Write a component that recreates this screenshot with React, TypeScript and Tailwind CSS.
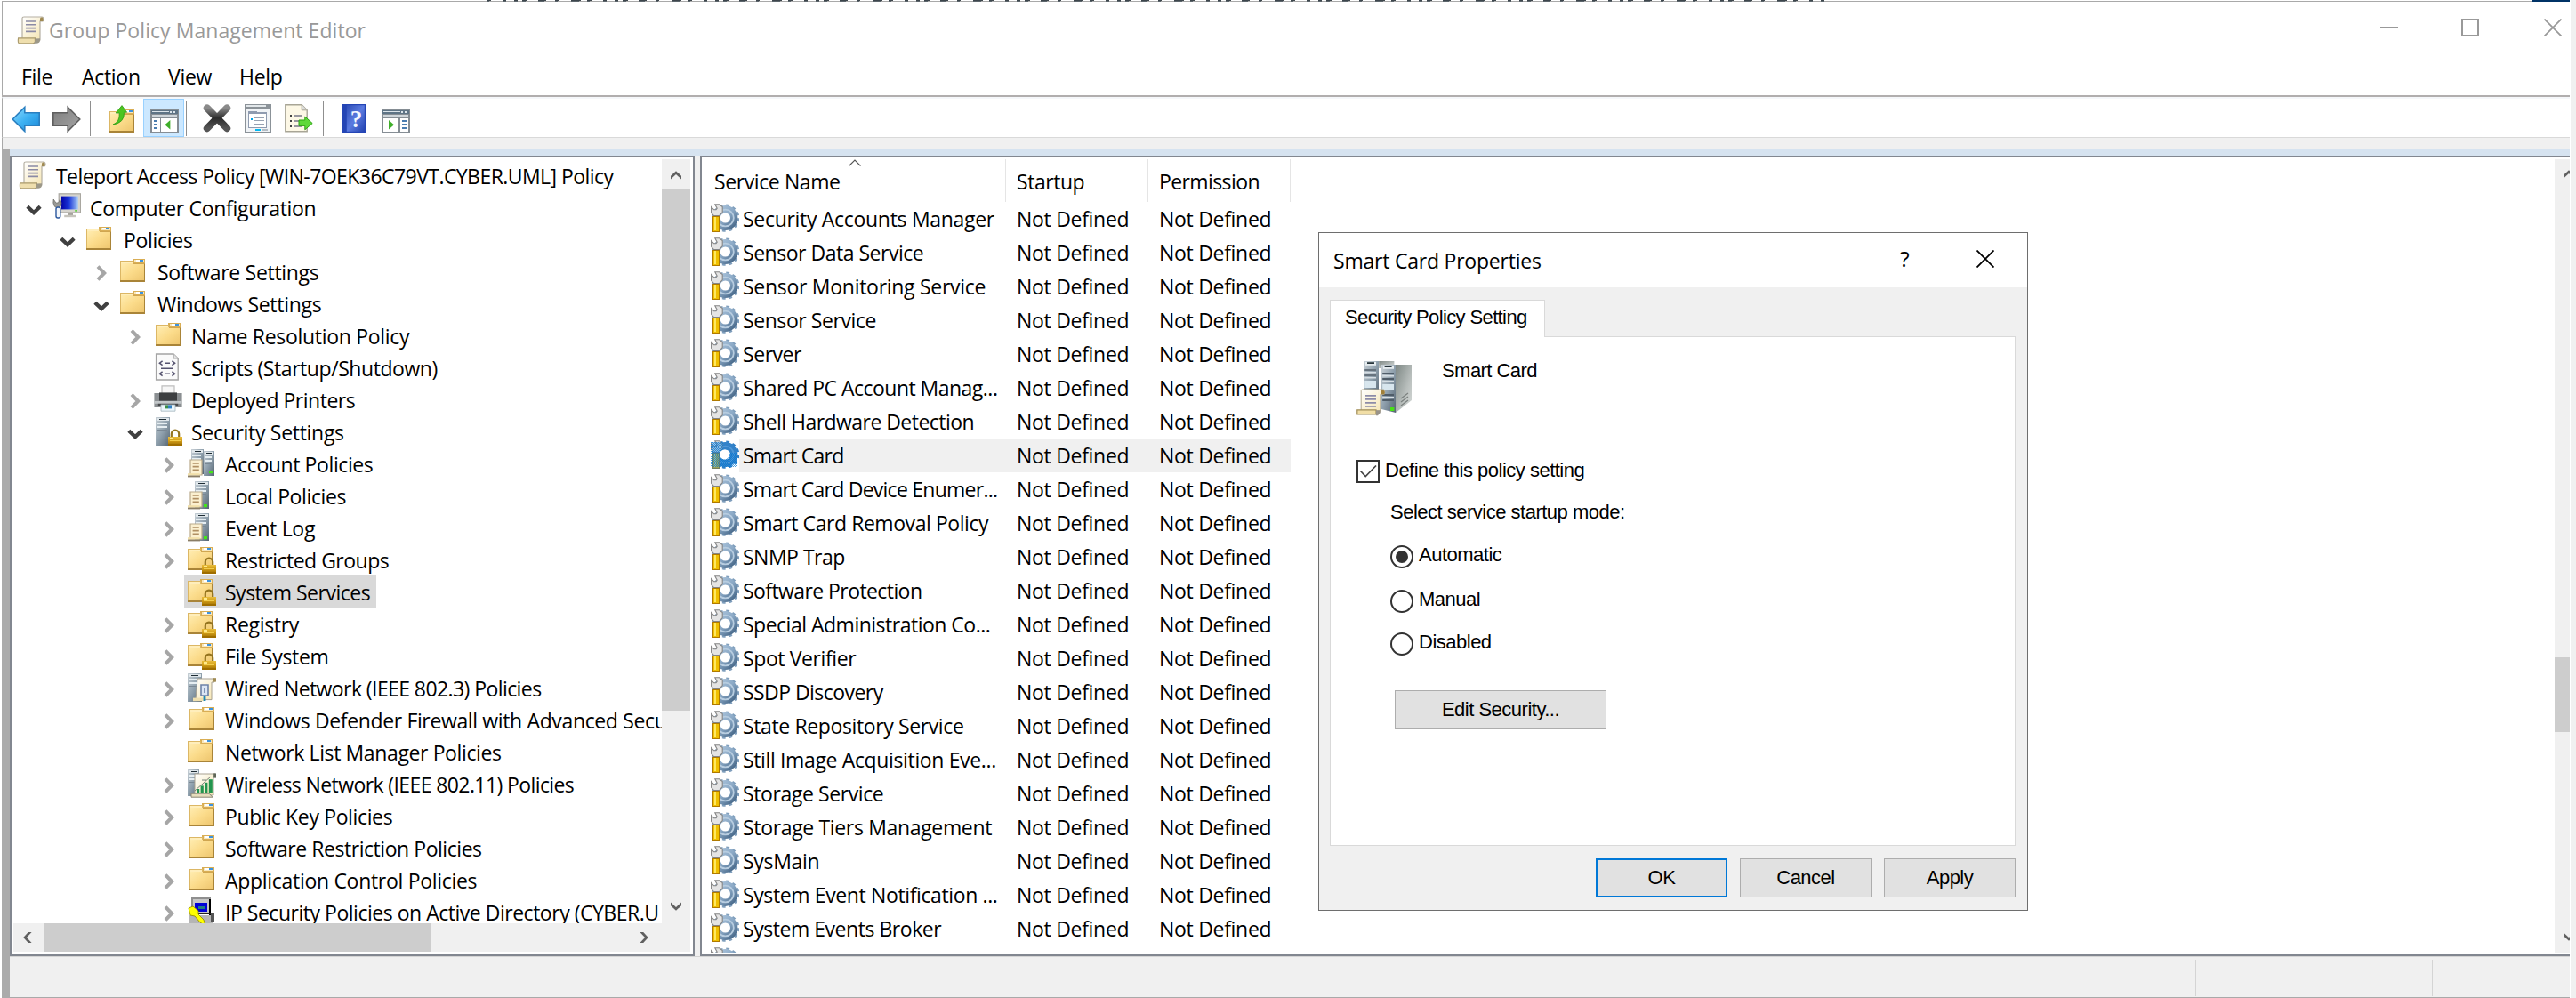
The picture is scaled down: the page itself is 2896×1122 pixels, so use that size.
import React from "react";

/* ---------- icons (drawn on a 16 unit grid, shown at 32px) ---------- */

const Svg = ({ children, className = "size-8" }: { children: React.ReactNode; className?: string }) => (
  <svg viewBox="0 0 16 16" className={`block shrink-0 ${className}`}>
    {children}
  </svg>
);

const Defs = () => (
  <svg className="absolute size-0">
    <defs>
      <linearGradient id="folder" x1="0" y1="0" x2="1" y2="1">
        <stop offset="0" stopColor="#ffecb0" />
        <stop offset="0.5" stopColor="#fbdb8a" />
        <stop offset="1" stopColor="#eec66f" />
      </linearGradient>
      <linearGradient id="steel" x1="0" y1="0" x2="1" y2="1">
        <stop offset="0" stopColor="#c8d0d6" />
        <stop offset="0.5" stopColor="#8fa0ad" />
        <stop offset="1" stopColor="#566572" />
      </linearGradient>
      <linearGradient id="side" x1="0" y1="0" x2="1" y2="1">
        <stop offset="0" stopColor="#7d8784" />
        <stop offset="0.6" stopColor="#b9bfbd" />
        <stop offset="1" stopColor="#d8dcda" />
      </linearGradient>
      <linearGradient id="paper" x1="0" y1="0" x2="1" y2="1">
        <stop offset="0" stopColor="#ffffff" />
        <stop offset="1" stopColor="#f5e4ae" />
      </linearGradient>
      <linearGradient id="gear" x1="0" y1="0" x2="1" y2="1">
        <stop offset="0" stopColor="#a9c2da" />
        <stop offset="0.5" stopColor="#8ba9c6" />
        <stop offset="1" stopColor="#4a6b8c" />
      </linearGradient>
      <linearGradient id="gold" x1="0" y1="0" x2="0" y2="1">
        <stop offset="0" stopColor="#e8bc3a" />
        <stop offset="0.5" stopColor="#cf9a16" />
        <stop offset="1" stopColor="#9a6c00" />
      </linearGradient>
      <linearGradient id="screen" x1="0" y1="0" x2="1" y2="0">
        <stop offset="0" stopColor="#0404a8" />
        <stop offset="0.45" stopColor="#1a35d8" />
        <stop offset="1" stopColor="#a9ccf7" />
      </linearGradient>
      <linearGradient id="back" x1="0" y1="0" x2="1" y2="1">
        <stop offset="0" stopColor="#8fdcff" />
        <stop offset="0.5" stopColor="#3db1f2" />
        <stop offset="1" stopColor="#1a86d6" />
      </linearGradient>
      <linearGradient id="fwd" x1="0" y1="0" x2="1" y2="1">
        <stop offset="0" stopColor="#7d7d7d" />
        <stop offset="1" stopColor="#a5a5a5" />
      </linearGradient>
      <linearGradient id="cross" x1="0" y1="0" x2="0" y2="1">
        <stop offset="0" stopColor="#8a8a8a" />
        <stop offset="0.5" stopColor="#2b2b2b" />
        <stop offset="1" stopColor="#555" />
      </linearGradient>
      <linearGradient id="book" x1="0" y1="0" x2="1" y2="1">
        <stop offset="0" stopColor="#2f4fb8" />
        <stop offset="0.5" stopColor="#5b7be0" />
        <stop offset="1" stopColor="#2343b0" />
      </linearGradient>
      <pattern id="dither" width="1" height="1" patternUnits="userSpaceOnUse">
        <rect width="0.5" height="0.5" fill="#0078d7" />
        <rect x="0.5" y="0.5" width="0.5" height="0.5" fill="#0078d7" />
      </pattern>
    </defs>
  </svg>
);

const FolderShape = () => (
  <g shapeRendering="crispEdges">
    <rect x="7" y="1" width="7" height="3" fill="#d9ae55" />
    <rect x="8" y="1.5" width="5.5" height="1.5" fill="#f7e7bd" />
    <rect x="9" y="1.5" width="2" height="1" fill="#ffffff" />
    <rect x="11" y="1.5" width="2" height="1" fill="#3c93e0" />
    <rect x="0" y="2" width="7.5" height="12" fill="#dcb765" />
    <rect x="7" y="3.5" width="7" height="10.5" fill="#c79c45" />
    <rect x="0.5" y="2.5" width="6.5" height="2" fill="#ffeebb" />
    <rect x="0.5" y="3.5" width="13" height="9.5" fill="url(#folder)" />
    <rect x="0" y="13" width="14" height="1" fill="#a98438" />
    <rect x="13.5" y="4" width="0.5" height="10" fill="#a98438" />
    <rect x="7.5" y="3.5" width="6" height="0.6" fill="#d0a650" />
  </g>
);

const Lock = () => (
  <g>
    <path d="M9.9 11.5V9.4a2.1 2.1 0 0 1 4.2 0v2.1" fill="none" stroke="#94741f" strokeWidth="1.1" />
    <g shapeRendering="crispEdges">
      <rect x="8" y="11" width="8" height="5" fill="url(#gold)" />
      <rect x="9" y="11.5" width="2" height="1" fill="#ffe98a" />
      <rect x="9" y="13" width="6" height="0.5" fill="#f2cd4c" />
      <rect x="8" y="15" width="8" height="1" fill="#a06e00" />
    </g>
  </g>
);

const Folder = () => (
  <Svg>
    <FolderShape />
  </Svg>
);
const FolderIn = () => (
  <Svg>
    <g transform="translate(1 0)">
      <FolderShape />
    </g>
  </Svg>
);
const FolderLock = () => (
  <Svg>
    <FolderShape />
    <Lock />
  </Svg>
);

const Scroll = ({ className }: { className?: string }) => (
  <Svg className={className}>
    <path d="M3 1.2 Q3 0.5 4 0.5 H14 Q15 0.6 15 2 Q15 3 14 3 H13 V13.5 H3 Z" fill="url(#paper)" stroke="#b5b0a3" strokeWidth="0.6" />
    <path d="M13 3 V1.4 Q13.4 0.5 14.2 0.8 Q15.2 1.6 14.6 3 Z" fill="#a08a52" />
    <path d="M5 3h6M5 4.9h6M5 6.8h6M5 8.7h6" stroke="#8b8aa5" strokeWidth="0.8" />
    <path d="M0.8 12.4 H10.2 V14.6 Q10 15.4 9 15.4 H1.2 Q0.4 15 0.8 12.4Z" fill="#efdfae" stroke="#aa9a6c" strokeWidth="0.6" />
    <path d="M10.2 12.8 L13 12.6 V14 Q12.6 15.4 11 15.4 H9.2 Q10.4 15 10.2 12.8Z" fill="#9c9889" />
  </Svg>
);

const Tower = ({ x, y = 0, w = 8, h = 16 }: { x: number; y?: number; w?: number; h?: number }) => (
  <g shapeRendering="crispEdges" transform={`translate(${x} ${y})`}>
    <rect width={w} height={h} fill="url(#steel)" />
    <rect x="0.5" y="0.5" width={w - 1} height="1.5" fill="#dfe6ea" />
    <rect x={w * 0.28} y="0.8" width={w * 0.5} height="0.9" fill="#1d2b33" />
    <rect x="0.5" y="3" width={w - 2} height="1" fill="#e6eef2" />
    <rect x="0.5" y="5" width={w - 2} height="1" fill="#e6eef2" />
    <rect x="0.5" y="7" width={w - 2} height="0.5" fill="#7a8894" />
  </g>
);

const MiniScroll = () => (
  <g>
    <path d="M1.5 6 H8 V14.5 H1.5Z" fill="#fbf0d0" stroke="#b9a98a" strokeWidth="0.6" />
    <path d="M2.8 8h3.6M2.8 9.8h3.6M2.8 11.6h3.6" stroke="#b08f63" strokeWidth="0.8" />
    <rect x="0" y="13.6" width="6.8" height="1.2" fill="#f1dfa9" />
    <rect x="0" y="14.8" width="7" height="0.9" fill="#8a7d66" />
  </g>
);

const ServerLock = () => (
  <Svg>
    <Tower x={1} />
    <Lock />
  </Svg>
);
const ServerPair = () => (
  <Svg>
    <Tower x={2} w={7} h={14} />
    <Tower x={9} y={1} w={6} h={14} />
    <MiniScroll />
    <rect x="12" y="12.2" width="2" height="1.4" fill="#43e619" />
  </Svg>
);
const ServerScroll = () => (
  <Svg>
    <Tower x={4} w={8} h={15.5} />
    <MiniScroll />
    <rect x="9" y="13" width="2" height="1.6" fill="#43e619" />
  </Svg>
);
const Wired = () => (
  <Svg>
    <Tower x={0} w={8} h={16} />
    <path d="M5.5 3 H15 V5 H13.5 V14.8 H4.5 Z" fill="url(#paper)" stroke="#a8a190" strokeWidth="0.5" />
    <rect x="14" y="2.6" width="2" height="2.2" fill="#a08a52" />
    <path d="M7.5 6.5h4v6h-4zM9.5 8v3" fill="#dce6f4" stroke="#6d83a8" strokeWidth="0.8" />
    <path d="M3 13.8h6v1.8h-6z" fill="#efdfae" />
    <path d="M9.5 12.5v3" stroke="#1a87b8" strokeWidth="1.4" />
  </Svg>
);
const Wireless = () => (
  <Svg>
    <Tower x={0} w={6.5} h={15} />
    <path d="M4 2.5 H15.5 V4 H14.5 V14.5 H4 Z" fill="url(#paper)" stroke="#a8a190" strokeWidth="0.5" />
    <rect x="14.6" y="2.2" width="1.4" height="2.6" fill="#5f6658" />
    <g fill="#23944f">
      <rect x="5" y="11" width="1.6" height="2" />
      <rect x="7.3" y="9.2" width="1.6" height="3.8" />
      <rect x="9.6" y="7.4" width="1.6" height="5.6" />
      <rect x="11.9" y="5.6" width="2" height="7.4" />
    </g>
    <path d="M8 6h2.5M4 12l9-8" stroke="#77857b" strokeWidth="0.5" />
    <path d="M2 13.6h10l2 2h-12z" fill="#e6dcbc" stroke="#8b8778" strokeWidth="0.5" />
  </Svg>
);
const IpSec = () => (
  <Svg>
    <g shapeRendering="crispEdges">
      <rect x="2" y="0" width="11" height="9" fill="#8f8f8f" />
      <rect x="3" y="1" width="9" height="8" fill="#c6c6c6" />
      <rect x="12" y="1" width="1" height="9" fill="#000" />
      <rect x="4" y="3" width="7" height="5" fill="#0000d8" />
      <rect x="6" y="5" width="4" height="1.5" fill="#1d7b83" />
      <rect x="1" y="10" width="13" height="6" fill="#b5b5b5" />
      <rect x="13" y="9" width="2" height="5" fill="#555" />
      <rect x="5" y="8.4" width="8" height="1" fill="#222" />
    </g>
    <path d="M0.5 6 L3 5 L6 7.5 L6 9.5 L9 12.5 L10 16 L7 14 L4 10.5 L1.5 10 Z" fill="#ffff00" stroke="#8a8300" strokeWidth="0.4" />
  </Svg>
);
const Computer = () => (
  <Svg>
    <rect x="3.6" y="0.4" width="12.2" height="10.6" fill="#d7d5cf" stroke="#a9a7a0" strokeWidth="0.6" />
    <rect x="5" y="1.8" width="9.4" height="7.4" fill="url(#screen)" />
    <rect x="12.6" y="9.6" width="1.4" height="0.7" fill="#49d325" />
    <rect x="8.5" y="11" width="3" height="1.6" fill="#a6a49d" />
    <rect x="6.6" y="12.4" width="6.8" height="1.2" fill="#c6c4bd" />
    <path d="M0.6 3.5 L2 5.6 L3.4 5.4 L4.2 3.6 Q5.6 5.6 4.6 7.4 L3 8.6 L1.2 7.6 Q0 5.6 0.6 3.5Z" fill="#9a9a96" stroke="#6f6f6a" strokeWidth="0.4" />
    <rect x="2" y="8" width="2.4" height="6" rx="1" fill="#f4f7fb" stroke="#2b579e" strokeWidth="0.7" />
  </Svg>
);
const Script = () => (
  <Svg>
    <path d="M1.3 0.5 H11 L13.6 3 V15 H1.3Z" fill="#fafafa" stroke="#a4a4a4" strokeWidth="0.7" />
    <path d="M11 0.5V3h2.6" fill="#e2e2e2" stroke="#a4a4a4" strokeWidth="0.6" />
    <path d="M4.8 4.4L3.2 5.6l1.6 1.2M10.2 4.4l1.6 1.2-1.6 1.2M6 5.6h3M4.8 10.4l-1.6 1.2 1.6 1.2M10.2 10.4l1.6 1.2-1.6 1.2M6 11.6h3M4 8.6h7" fill="none" stroke="#55536f" strokeWidth="0.75" />
  </Svg>
);
const Printer = () => (
  <Svg>
    <path d="M4.5 0.4h7v5h-7z" fill="#f6f6f6" stroke="#bdbdbd" strokeWidth="0.6" />
    <path d="M0.2 4.5 H15.8 V12.5 H0.2Z" fill="#8b8f92" />
    <rect x="3" y="4.2" width="10" height="4.6" fill="#3d3f41" />
    <rect x="0.2" y="9" width="15.6" height="1.4" fill="#c3c7c9" />
    <rect x="2.4" y="10.4" width="11.2" height="1.4" fill="#47494b" />
    <path d="M4 11h8v3.6H4z" fill="#eaf5fb" stroke="#a5b5bd" strokeWidth="0.4" />
    <rect x="6" y="11.2" width="2" height="2" fill="#3a8e48" />
    <rect x="8" y="11.2" width="2" height="2" fill="#2f7fc2" />
  </Svg>
);

const Gear = ({ selected }: { selected?: boolean }) => (
  <Svg>
    <circle cx="8.4" cy="8.1" r="7.1" fill="none" stroke={selected ? "#2f7ec6" : "#7f9ebc"} strokeWidth="1.4" strokeDasharray="1.86 1.86" />
    <circle cx="8.2" cy="8" r="4.9" fill="none" stroke={selected ? "#3282c9" : "url(#gear)"} strokeWidth="4.2" />
    <circle cx="8.2" cy="8" r="4.7" fill="none" stroke={selected ? "#4f96d6" : "#b8cde0"} strokeWidth="0.9" />
    <path d="M0.3 1.8 L1.8 3.4 H3 L3.6 2.6 L2.4 0.4 H4.8 L6.6 1.8 V4.8 L4.8 6.8 H1.8 L0.3 5.2Z" fill="#e4e4e4" stroke="#858585" strokeWidth="0.55" />
    <g shapeRendering="crispEdges">
      <rect x="1" y="7" width="4" height="9" fill="#b07a00" />
      <rect x="1.6" y="7.5" width="2.8" height="7.8" fill="#f0c000" />
      <rect x="2" y="7.5" width="1" height="7.5" fill="#ffe860" />
    </g>
    {selected && <path d="M0.5 1h6.5v6h-2v9h-4.5z" fill="#2f86d0" opacity="0.45" />}
    {selected && <path d="M0 1h7v6h8v8H0z" fill="url(#dither)" opacity="0.7" />}
    {selected && <circle cx="7.7" cy="8" r="2.7" fill="#fff" />}
  </Svg>
);

const BigServer = () => (
  <svg viewBox="0 0 32 32" className="block size-16 shrink-0">
    <path d="M12.6 1h8.6v4h-8.6z" fill="url(#side)" />
    <rect x="4" y="1" width="8.5" height="21" fill="url(#steel)" />
    <rect x="5" y="1.4" width="6" height="2" fill="#e5ecef" />
    <rect x="6" y="1.6" width="4" height="0.9" fill="#26333a" />
    <path d="M4.6 6h6.4M4.6 9h6.4" stroke="#67737e" strokeWidth="1" />
    <path d="M4.6 7.4h6.4M4.6 10.4h6.4" stroke="#d6dee4" strokeWidth="0.7" />
    <rect x="4.6" y="12" width="6.4" height="4" fill="#d8e6ee" />
    <path d="M22 3h9v20l-9 7z" fill="url(#side)" />
    <path d="M25 22l4-3M25 24l4-3M25 26l4-3" stroke="#7b817f" strokeWidth="0.6" />
    <path d="M14 3h8v27l-8-2z" fill="url(#steel)" />
    <rect x="15" y="3.4" width="6" height="2" fill="#e5ecef" />
    <rect x="15.8" y="3.6" width="4" height="0.9" fill="#26333a" />
    <path d="M14.6 8h6.4M14.6 11h6.4M14.6 20h6.4M14.6 23h6.4" stroke="#4f5c68" strokeWidth="1" />
    <path d="M14.6 9.4h6.4M14.6 12.4h6.4M14.6 21.4h6.4" stroke="#d6dee4" strokeWidth="0.7" />
    <rect x="14.6" y="14" width="6.4" height="3.4" fill="#d8e6ee" />
    <rect x="19" y="27" width="2.2" height="2" fill="#49e017" />
    <path d="M2.6 17.6 Q2.6 17 3.4 17 H15.4 Q16.4 17.6 15.6 19.6 H13.4 V29 H2.6Z" fill="url(#paper)" stroke="#b2a98e" strokeWidth="0.5" />
    <path d="M13.6 19.6 Q13.4 17.4 14.6 17.2 Q16.4 17.6 15.6 19.6Z" fill="#a0803a" />
    <path d="M5 20.4h6M5 22.4h6M5 24.4h6M5 26.4h6" stroke="#8d8ca8" strokeWidth="0.9" />
    <path d="M0.4 28.4 H11 V31 H0.4Z" fill="#f1dea6" stroke="#a08d58" strokeWidth="0.6" />
    <path d="M11 28.6h2.4v1.4l-1.4 1.6h-1z" fill="#99938a" />
  </svg>
);

/* toolbar icons */
const Arrow = ({ back }: { back?: boolean }) => (
  <Svg>
    <path
      d={back ? "M0.6 8 L7.4 1.2 V4.4 H15.6 V11.6 H7.4 V14.8 Z" : "M15.4 8 L8.6 1.2 V4.4 H0.4 V11.6 H8.6 V14.8 Z"}
      fill={back ? "url(#back)" : "url(#fwd)"}
      stroke={back ? "#2a7fc0" : "#5f5f5f"}
      strokeWidth="0.8"
    />
  </Svg>
);
const FolderUp = () => (
  <Svg>
    <g transform="translate(0 2)">
      <FolderShape />
    </g>
    <path d="M2 11.5 Q6 10 5.6 5 H3.6 L7 0.8 L9.8 4.6 H8.2 Q8.6 10.5 2 11.5Z" fill="#4cc522" stroke="#2c9a12" strokeWidth="0.4" />
  </Svg>
);
const PaneIcon = ({ right }: { right?: boolean }) => (
  <Svg>
    <g shapeRendering="crispEdges">
      <rect x="0" y="2" width="16" height="13" fill="#858d94" />
      <rect x="0.7" y="2.7" width="14.6" height="2" fill="#5e7486" />
      <rect x="1" y="3" width="9.5" height="0.7" fill="#dbe4ea" />
      <rect x="11" y="3" width="1" height="0.8" fill="#dbe4ea" />
      <rect x="13" y="3" width="1" height="0.8" fill="#dbe4ea" />
      <rect x="1" y="5.2" width="14" height="1.2" fill="#cfd6db" />
      <rect x="1" y="7" width="14" height="7.3" fill="#fff" />
      <rect x={right ? 9.6 : 5.4} y="7" width="0.7" height="7.3" fill="#858d94" />
      {[7.8, 9.8, 11.8].map((y) => (
        <rect key={y} x={right ? 11.6 : 2} y={y} width="2.2" height="1" fill="#4a7db0" />
      ))}
    </g>
    <path d={right ? "M4 8v5.2l3-2.6z" : "M11.2 8v5.2l-3-2.6z"} fill="#3fae2a" />
  </Svg>
);
const DeleteX = () => (
  <Svg>
    <path d="M2.4 2.2 L13.6 13.6 M13.6 2.2 L2.4 13.6" stroke="url(#cross)" strokeWidth="4" strokeLinecap="round" />
  </Svg>
);
const Props = () => (
  <Svg>
    <g shapeRendering="crispEdges">
      <rect x="0.5" y="0" width="15" height="16" fill="#8b9298" />
      <rect x="1.3" y="0.7" width="11" height="1" fill="#e2e7ea" />
      <rect x="1.3" y="2.4" width="13.4" height="12.9" fill="#f0f3f6" />
      <rect x="2.6" y="4" width="10.6" height="9.4" fill="#8f9bb0" />
      <rect x="3.2" y="5.4" width="9.4" height="7.4" fill="#fff" />
      <rect x="7.5" y="4" width="5.7" height="0.7" fill="#f0f3f6" />
      <rect x="4.2" y="7.8" width="1" height="1" fill="#00a5e8" />
      <rect x="6" y="7.2" width="5.6" height="0.7" fill="#98a2b2" />
      <rect x="6" y="9" width="5.6" height="0.7" fill="#98a2b2" />
      <rect x="6" y="10.8" width="5.6" height="0.7" fill="#98a2b2" />
      <rect x="6.6" y="14" width="3" height="1.2" fill="#00b9f2" />
      <rect x="10.6" y="14" width="3" height="1.2" fill="#b4bcc4" />
    </g>
  </Svg>
);
const Export = () => (
  <Svg>
    <path d="M0.4 0.4 H9.6 L12.6 3.4 V15.4 H0.4Z" fill="#fdf8e6" stroke="#a8a596" strokeWidth="0.7" />
    <path d="M9.6 0.4v3h3" fill="#dcdcdc" stroke="#a8a596" strokeWidth="0.5" />
    <path d="M3 6.5h1M3 9.5h1M3 12.5h1" stroke="#444" strokeWidth="0.9" />
    <path d="M5 6.5h5M5 9.5h4M5 12.5h5" stroke="#777587" strokeWidth="0.8" />
    <path d="M8 9h3.4V7l4.2 3.8-4.2 3.6v-2.2H8z" fill="#5fd93a" stroke="#2fa315" strokeWidth="0.5" />
  </Svg>
);
const HelpBook = () => (
  <Svg>
    <rect x="1" y="0" width="13" height="16" fill="#2445b5" />
    <rect x="3.4" y="0.6" width="10" height="14.8" fill="url(#book)" />
    <text x="8.6" y="13" textAnchor="middle" fontSize="13.5" fontFamily="Liberation Serif, serif" fontWeight="700" fill="#f4f6ff">
      ?
    </text>
  </Svg>
);

/* small glyphs */
const Chevron = ({ open }: { open?: boolean }) =>
  open ? (
    <svg viewBox="0 0 18 12" className="mr-0.5 mt-[5px] h-3 w-[18px]">
      <path d="M1.8 2.2 L9 9 L16.2 2.2" fill="none" stroke="#404040" strokeWidth="4.2" />
    </svg>
  ) : (
    <svg viewBox="0 0 12 18" className="mr-0.5 mt-1 h-[18px] w-3">
      <path d="M2 1.6 L9.2 9 L2 16.4" fill="none" stroke="#a6a6a6" strokeWidth="4" />
    </svg>
  );

const rotation = { up: "", down: "rotate-180", left: "-rotate-90", right: "rotate-90" };
const ScrollArrow = ({ dir }: { dir: keyof typeof rotation }) => (
  <svg viewBox="0 0 12 10" className={`h-2.5 w-3 shrink-0 ${rotation[dir]}`}>
    <path d="M0 9.6 V5.8 L6 0.2 L12 5.8 V9.6 L6 4 Z" fill="#606060" />
  </svg>
);
const Close = ({ className }: { className: string }) => (
  <svg viewBox="0 0 20 20" className={`size-5 ${className}`}>
    <path d="M0.5 0.5 L19.5 19.5 M19.5 0.5 L0.5 19.5" stroke="currentColor" strokeWidth="1.8" />
  </svg>
);

/* ---------- tree ---------- */

type Node = [level: number, state: "open" | "closed" | "leaf", Icon: React.ComponentType, label: string, tracking?: string];

const tree: Node[] = [
  [0, "leaf", Scroll, "Teleport Access Policy [WIN-7OEK36C79VT.CYBER.UML] Policy", "tracking-[-0.56px]"],
  [1, "open", Computer, "Computer Configuration"],
  [2, "open", Folder, "Policies"],
  [3, "closed", Folder, "Software Settings"],
  [3, "open", Folder, "Windows Settings"],
  [4, "closed", FolderIn, "Name Resolution Policy"],
  [4, "leaf", Script, "Scripts (Startup/Shutdown)", "tracking-[-0.44px]"],
  [4, "closed", Printer, "Deployed Printers", "tracking-[-0.48px]"],
  [4, "open", ServerLock, "Security Settings"],
  [5, "closed", ServerPair, "Account Policies", "tracking-[-0.4px]"],
  [5, "closed", ServerScroll, "Local Policies", "tracking-[-0.38px]"],
  [5, "closed", ServerScroll, "Event Log"],
  [5, "closed", FolderLock, "Restricted Groups", "tracking-[-0.5px]"],
  [5, "leaf", FolderLock, "System Services", "tracking-[-0.5px]"],
  [5, "closed", FolderLock, "Registry"],
  [5, "closed", FolderLock, "File System"],
  [5, "closed", Wired, "Wired Network (IEEE 802.3) Policies", "tracking-[-0.58px]"],
  [5, "closed", FolderIn, "Windows Defender Firewall with Advanced Secu", "tracking-[-0.36px]"],
  [5, "leaf", Folder, "Network List Manager Policies", "tracking-[-0.38px]"],
  [5, "closed", Wireless, "Wireless Network (IEEE 802.11) Policies", "tracking-[-0.6px]"],
  [5, "closed", FolderIn, "Public Key Policies", "tracking-[-0.36px]"],
  [5, "closed", FolderIn, "Software Restriction Policies", "tracking-[-0.45px]"],
  [5, "closed", FolderIn, "Application Control Policies"],
  [5, "closed", IpSec, "IP Security Policies on Active Directory (CYBER.U", "tracking-[-0.48px]"],
];

const indent = ["pl-0", "pl-[9px]", "pl-[47px]", "pl-[85px]", "pl-[123px]", "pl-[161px]"];

const TreeRow = ({ node: [level, state, Icon, label, tracking = ""] }: { node: Node }) => {
  const selected = label === "System Services";
  return (
    <div className={`flex h-9 shrink-0 ${indent[level]}`}>
      <div className={`flex shrink-0 items-center justify-center ${level === 0 ? "w-1" : "w-[33px]"}`}>
        {state !== "leaf" && <Chevron open={state === "open"} />}
      </div>
      <div className={`flex h-9 shrink-0 gap-2.5 pl-1 pt-0.5 ${selected ? "w-[216px] bg-[#d9d9d9]" : ""}`}>
        <Icon />
        <span className={`-mt-0.5 h-9 whitespace-nowrap leading-[38px] ${tracking}`}>{label}</span>
      </div>
    </div>
  );
};

const TreePanel = () => (
  <div className="flex w-[770px] shrink-0 flex-col border-2 border-[#828790] bg-white pb-0.5 pl-0.5 pr-[3px] pt-0.5">
    <div className="flex h-[859px]">
      <div className="-ml-0.5 flex w-[731px] flex-col overflow-hidden">
        {tree.map((n) => (
          <TreeRow key={n[3]} node={n} />
        ))}
      </div>
      <div className="flex w-8 flex-col items-center bg-[#f0f0f0]">
        <div className="flex h-[34px] items-center pt-0.5">
          <ScrollArrow dir="up" />
        </div>
        <div className="h-[586px] w-full bg-[#cdcdcd]" />
        <div className="mt-auto flex h-[34px] items-center pb-1">
          <ScrollArrow dir="down" />
        </div>
      </div>
    </div>
    <div className="flex h-8 items-center bg-[#f0f0f0]">
      <div className="flex w-[34px] justify-center pr-0.5">
        <ScrollArrow dir="left" />
      </div>
      <div className="h-8 w-[436px] bg-[#cdcdcd]" />
      <div className="ml-auto mr-[46px]">
        <ScrollArrow dir="right" />
      </div>
    </div>
  </div>
);

/* ---------- service list ---------- */

const services: [name: string, tracking: string][] = [
  ["Security Accounts Manager", "tracking-[-0.3px]"],
  ["Sensor Data Service", "tracking-[-0.48px]"],
  ["Sensor Monitoring Service", "tracking-[-0.28px]"],
  ["Sensor Service", "tracking-[-0.42px]"],
  ["Server", "tracking-[-0.45px]"],
  ["Shared PC Account Manag...", "tracking-[-0.52px]"],
  ["Shell Hardware Detection", "tracking-[-0.54px]"],
  ["Smart Card", "tracking-[-0.75px]"],
  ["Smart Card Device Enumer...", "tracking-[-0.75px]"],
  ["Smart Card Removal Policy", "tracking-[-0.44px]"],
  ["SNMP Trap", "tracking-[-0.5px]"],
  ["Software Protection", "tracking-[-0.58px]"],
  ["Special Administration Co...", "tracking-[-0.5px]"],
  ["Spot Verifier", "tracking-[-0.4px]"],
  ["SSDP Discovery", "tracking-[-0.55px]"],
  ["State Repository Service", "tracking-[-0.38px]"],
  ["Still Image Acquisition Eve...", "tracking-[-0.36px]"],
  ["Storage Service", "tracking-[-0.4px]"],
  ["Storage Tiers Management", "tracking-[-0.34px]"],
  ["SysMain", "tracking-[-0.3px]"],
  ["System Event Notification ...", "tracking-[-0.38px]"],
  ["System Events Broker", "tracking-[-0.46px]"],
];

const ListPanel = () => (
  <div className="flex flex-1 border-y-2 border-l-2 border-[#828790] bg-white py-0.5">
    <div className="flex h-[892px] flex-1 flex-col overflow-hidden">
      <div className="flex h-12 shrink-0 leading-[46px]">
        <div className="relative w-[342px] border-r border-[#e5e5e5] pl-3.5 pt-0.5 tracking-[-0.4px]">
          Service Name
          <svg viewBox="0 0 14 8" className="absolute left-[165px] top-0 h-2 w-3.5">
            <path d="M0.5 7.5 L7 1 L13.5 7.5" fill="none" stroke="#555" strokeWidth="1.1" />
          </svg>
        </div>
        <div className="w-40 border-r border-[#e5e5e5] pl-3 pt-0.5 tracking-[-0.45px]">Startup</div>
        <div className="w-40 border-r border-[#e5e5e5] pl-3 pt-0.5 tracking-[-0.6px]">Permission</div>
      </div>
      {services.map(([name, tracking]) => {
        const selected = name === "Smart Card";
        return (
          <div key={name} className="flex h-[38px] shrink-0 pl-2.5 leading-[38px]">
            <div className="w-8 pt-0.5">
              <Gear selected={selected} />
            </div>
            <div className={`flex whitespace-nowrap ${selected ? "bg-[#f0f0f0]" : ""}`}>
              <div className={`w-[310px] pl-1 ${tracking}`}>{name}</div>
              <div className="w-[160px] pl-0.5">Not Defined</div>
              <div className="w-[150px] pl-0.5">Not Defined</div>
            </div>
          </div>
        );
      })}
      <div className="h-[38px] shrink-0 pl-2.5 pt-0.5">
        <Gear />
      </div>
    </div>
    <div className="flex h-[892px] w-[17px] flex-col overflow-hidden bg-[#f0f0f0]">
      <div className="h-[560px] pl-2.5 pt-3">
        <ScrollArrow dir="up" />
      </div>
      <div className="h-[84px] bg-[#cdcdcd]" />
      <div className="mt-auto pb-[13px] pl-2.5">
        <ScrollArrow dir="down" />
      </div>
    </div>
  </div>
);

/* ---------- dialog ---------- */

const Radio = ({ label, checked, className }: { label: string; checked?: boolean; className: string }) => (
  <div className={`flex h-[26px] items-center ${className}`}>
    <div className="flex size-[26px] items-center justify-center rounded-full border-2 border-[#333]">
      {checked && <div className="size-3.5 rounded-full bg-[#333]" />}
    </div>
    <span className="-mt-1.5 pl-1.5">{label}</span>
  </div>
);

const Button = ({ label, className }: { label: string; className: string }) => (
  <div className={`flex h-11 items-center justify-center bg-[#e1e1e1] pb-0.5 ${className}`}>{label}</div>
);

const Dialog = () => (
  <div className="absolute left-[1482px] top-[261px] flex h-[763px] w-[798px] flex-col border border-[#6e6e6e] bg-[#f0f0f0] font-['Liberation_Sans',Arial,sans-serif] text-[22px] tracking-[-0.5px]">
    <div className="flex h-[61px] items-center bg-white pl-4 pr-[37px] font-['Open_Sans','Noto_Sans',sans-serif] text-[23px]">
      <span className="pt-0.5 tracking-[-0.22px]">Smart Card Properties</span>
      <span className="-mt-1 ml-auto mr-[76px] text-2xl">?</span>
      <Close className="-mt-1 text-black" />
    </div>
    <div className="flex flex-1 flex-col px-3 pt-3.5">
      <div className="relative z-10 -mb-px flex h-[42px] w-[242px] items-center border border-b-0 border-[#d9d9d9] bg-white pb-1 pl-4 tracking-[-0.62px]">
        Security Policy Setting
      </div>
      <div className="flex h-[573px] w-[771px] flex-col border border-[#d9d9d9] bg-white pl-[29px]">
        <div className="flex h-[138px] gap-8 pt-[25px]">
          <BigServer />
          <span className="leading-[26px] tracking-[-0.56px]">Smart Card</span>
        </div>
        <div className="flex h-[26px] items-center">
          <div className="flex size-[26px] items-center justify-center border-2 border-[#333]">
            <svg viewBox="0 0 22 22" className="size-[22px]">
              <path d="M2.5 10.5 L8.2 16.5 L20 4.5" fill="none" stroke="#444" strokeWidth="1.7" />
            </svg>
          </div>
          <span className="-mt-1 pl-1.5">Define this policy setting</span>
        </div>
        <div className="flex flex-col pl-[38px]">
          <span className="mt-[20px] h-[26px] leading-[26px]">Select service startup mode:</span>
          <Radio label="Automatic" checked className="mt-6" />
          <Radio label="Manual" className="mt-6" />
          <Radio label="Disabled" className="mt-[22px]" />
          <Button label="Edit Security..." className="ml-[5px] mt-[39px] w-[238px] border border-[#adadad]" />
        </div>
      </div>
      <div className="flex justify-end gap-3.5 pr-px pt-3.5">
        <Button label="OK" className="w-[148px] border-2 border-[#0078d7]" />
        <Button label="Cancel" className="w-[148px] border border-[#adadad]" />
        <Button label="Apply" className="w-[148px] border border-[#adadad]" />
      </div>
    </div>
  </div>
);

/* ---------- window ---------- */

export default function App() {
  return (
    <div className="relative flex h-[1122px] w-[2896px] overflow-hidden bg-[#f0f0f0] font-['Open_Sans','Noto_Sans',sans-serif] text-[23px] tracking-[-0.3px] text-black">
      <Defs />
      <div className="w-0.5 bg-white" />
      <div className="flex w-[2888px] flex-col border-r border-white bg-[#f0f0f0]">
        <div className="flex h-0.5 border-b border-[#a9a9a9] bg-white">
          <svg className="ml-[545px] h-0.5 w-[1508px]" viewBox="0 0 1508 2">
            <path d="M0 0.5H1508" stroke="#3d464d" strokeWidth="1" strokeDasharray="5 13 4 9 4 5 6 12 9 10 4 14 11 7" />
            <path d="M0 1.5H1508" stroke="#5c656b" strokeWidth="1" strokeDasharray="3 15 4 9 4 5 4 14 7 12 3 15 9 9" />
          </svg>
          <div className="ml-auto h-0.5 w-[43px] bg-[#003366]" />
        </div>

        <div className="flex h-[105px] shrink-0 flex-col border-l border-[#a9a9a9] bg-white">
          <div className="flex h-[64px] shrink-0">
            <div className="pl-4 pt-4">
              <Scroll />
            </div>
            <span className="pl-1 pt-4 leading-[32px] tracking-[0.06px] text-[#999]">Group Policy Management Editor</span>
            <div className="ml-auto flex pr-[9px] pt-[19px] text-[#999]">
              <div className="mt-[9px] h-0.5 w-5 bg-[#999]" />
              <div className="ml-[71px] size-5 border-2 border-[#999]" />
              <Close className="ml-[73px]" />
            </div>
          </div>
          <div className="flex pl-[21px] leading-[40px]">
            <span className="w-[68px]">File</span>
            <span className="w-[97px]">Action</span>
            <span className="w-20">View</span>
            <span>Help</span>
          </div>
        </div>
        <div className="h-0.5 shrink-0 bg-[#b1aeae]" />
        <div className="flex h-[46px] shrink-0 items-start border-b border-l border-t-2 border-b-[#d9d9d9] border-l-[#a9a9a9] border-t-[#f5f7fa] bg-white">
          <div className="w-[46px] pl-2.5 pt-[7px]">
            <Arrow back />
          </div>
          <div className="w-[52px] pl-2.5 pt-[7px]">
            <Arrow />
          </div>
          <div className="mt-0.5 h-10 w-px bg-[#8f8f8f]" />
          <div className="w-[59px] pl-[21px] pt-1.5">
            <FolderUp />
          </div>
          <div className="h-[43px] w-[46px] border border-[#99d1ff] bg-[#cce8ff] pl-[7px] pt-[7px]">
            <PaneIcon />
          </div>
          <div className="ml-0.5 mt-0.5 h-10 w-px bg-[#8f8f8f]" />
          <div className="flex w-[153px] gap-3.5 pl-[18px] pt-1.5">
            <DeleteX />
            <Props />
            <Export />
          </div>
          <div className="mt-0.5 h-10 w-px bg-[#8f8f8f]" />
          <div className="flex gap-3.5 pl-[19px] pt-1.5">
            <HelpBook />
            <div className="pt-0.5">
              <PaneIcon right />
            </div>
          </div>
        </div>
        <div className="h-3 shrink-0 border-l border-[#a9a9a9]" />

        <div className="flex h-[955px] shrink-0 border-l-[9px] border-[#ababab]">
          <div className="flex flex-1 flex-col">
            <div className="h-2 shrink-0 bg-[#d6e3f0]" />
            <div className="flex h-[900px] shrink-0 gap-1.5">
              <TreePanel />
              <ListPanel />
            </div>
            <div className="flex h-[47px] shrink-0 border-b border-t border-b-[#a9a9a9] border-t-[#d4d4d4]">
              <div className="ml-[2457px] mt-[3px] h-[41px] w-px bg-[#d4d4d4]" />
              <div className="ml-[265px] mt-[3px] h-[41px] w-px bg-[#d4d4d4]" />
            </div>
          </div>
        </div>
      </div>
      <Dialog />
    </div>
  );
}
